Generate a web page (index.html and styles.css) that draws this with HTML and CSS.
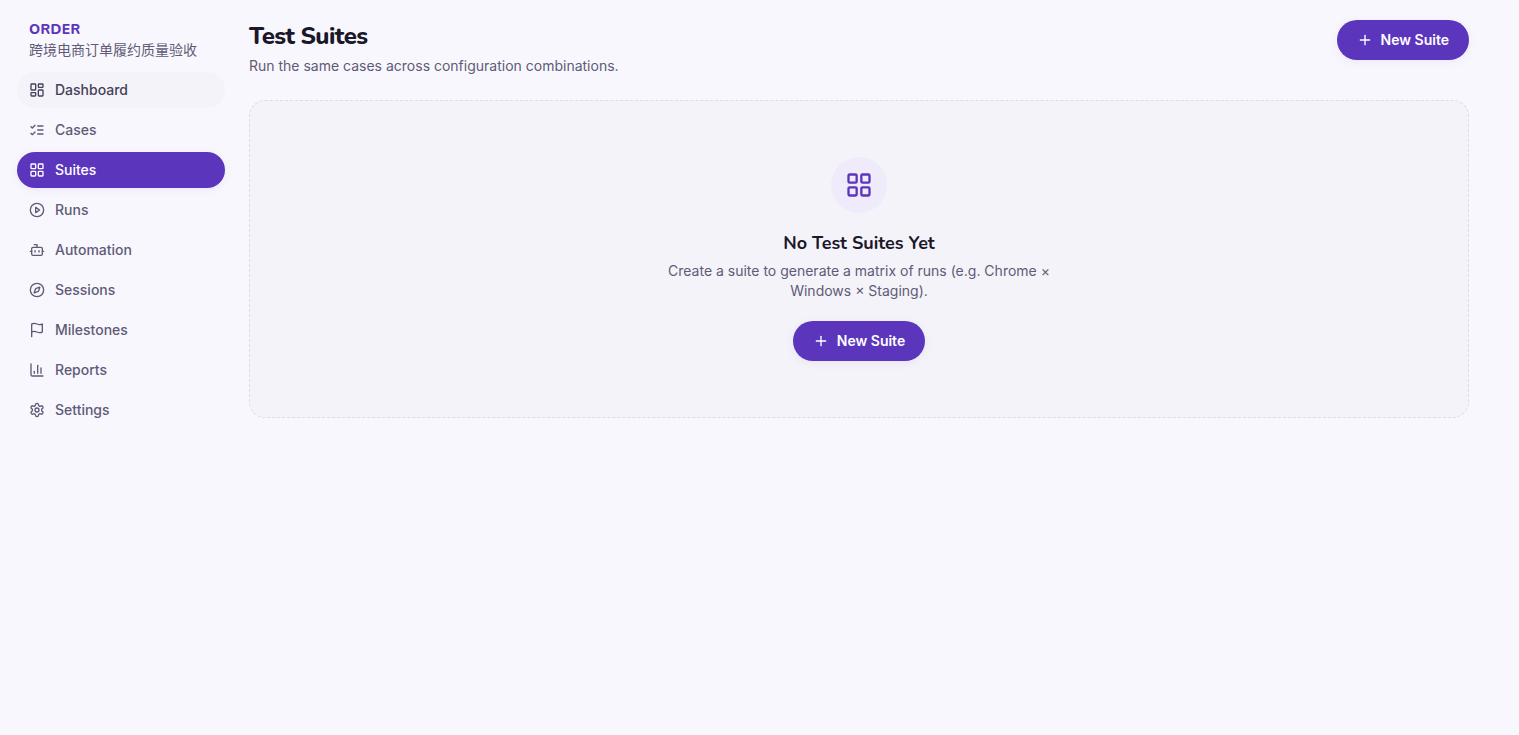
FILE: index.html
```html
<!DOCTYPE html>
<html lang="en">
<head>
    <meta charset="UTF-8">
    <meta name="viewport" content="width=device-width, initial-scale=1.0">
    <title>Test Suites</title>
    <link rel="stylesheet" href="styles.css">
</head>
<body>
    <div class="layout">
        <aside class="sidebar">
            <div class="project">
                <div class="project-key">ORDER</div>
                <div class="project-name" lang="zh-CN">跨境电商订单履约质量验收</div>
            </div>
            <nav class="nav">
                <a href="#" class="nav-link hovered">
                    <svg class="icon" viewBox="0 0 24 24"><rect width="7" height="9" x="3" y="3" rx="1"/><rect width="7" height="5" x="14" y="3" rx="1"/><rect width="7" height="9" x="14" y="12" rx="1"/><rect width="7" height="5" x="3" y="16" rx="1"/></svg>
                    Dashboard
                </a>
                <a href="#" class="nav-link">
                    <svg class="icon" viewBox="0 0 24 24"><path d="m3 17 2 2 4-4"/><path d="m3 7 2 2 4-4"/><path d="M13 6h8"/><path d="M13 12h8"/><path d="M13 18h8"/></svg>
                    Cases
                </a>
                <a href="#" class="nav-link active" aria-current="page">
                    <svg class="icon" viewBox="0 0 24 24"><rect width="7" height="7" x="3" y="3" rx="1"/><rect width="7" height="7" x="14" y="3" rx="1"/><rect width="7" height="7" x="14" y="14" rx="1"/><rect width="7" height="7" x="3" y="14" rx="1"/></svg>
                    Suites
                </a>
                <a href="#" class="nav-link">
                    <svg class="icon" viewBox="0 0 24 24"><circle cx="12" cy="12" r="10"/><polygon points="10 8 16 12 10 16 10 8"/></svg>
                    Runs
                </a>
                <a href="#" class="nav-link">
                    <svg class="icon" viewBox="0 0 24 24"><path d="M12 8V4H8"/><rect width="16" height="12" x="4" y="8" rx="2"/><path d="M2 14h2"/><path d="M20 14h2"/><path d="M15 13v2"/><path d="M9 13v2"/></svg>
                    Automation
                </a>
                <a href="#" class="nav-link">
                    <svg class="icon" viewBox="0 0 24 24"><circle cx="12" cy="12" r="10"/><path d="m16.24 7.76-1.804 5.411a2 2 0 0 1-1.265 1.265L7.76 16.24l1.804-5.411a2 2 0 0 1 1.265-1.265z"/></svg>
                    Sessions
                </a>
                <a href="#" class="nav-link">
                    <svg class="icon" viewBox="0 0 24 24"><path d="M4 15s1-1 4-1 5 2 8 2 4-1 4-1V3s-1 1-4 1-5-2-8-2-4 1-4 1z"/><path d="M4 22v-7"/></svg>
                    Milestones
                </a>
                <a href="#" class="nav-link">
                    <svg class="icon" viewBox="0 0 24 24"><path d="M3 3v16a2 2 0 0 0 2 2h16"/><path d="M18 17V9"/><path d="M13 17V5"/><path d="M8 17v-3"/></svg>
                    Reports
                </a>
                <a href="#" class="nav-link">
                    <svg class="icon" viewBox="0 0 24 24"><path d="M12.22 2h-.44a2 2 0 0 0-2 2v.18a2 2 0 0 1-1 1.73l-.43.25a2 2 0 0 1-2 0l-.15-.08a2 2 0 0 0-2.73.73l-.22.38a2 2 0 0 0 .73 2.73l.15.1a2 2 0 0 1 1 1.72v.51a2 2 0 0 1-1 1.74l-.15.09a2 2 0 0 0-.73 2.73l.22.38a2 2 0 0 0 2.73.73l.15-.08a2 2 0 0 1 2 0l.43.25a2 2 0 0 1 1 1.73V20a2 2 0 0 0 2 2h.44a2 2 0 0 0 2-2v-.18a2 2 0 0 1 1-1.73l.43-.25a2 2 0 0 1 2 0l.15.08a2 2 0 0 0 2.73-.73l.22-.39a2 2 0 0 0-.73-2.73l-.15-.08a2 2 0 0 1-1-1.74v-.5a2 2 0 0 1 1-1.74l.15-.09a2 2 0 0 0 .73-2.73l-.22-.38a2 2 0 0 0-2.73-.73l-.15.08a2 2 0 0 1-2 0l-.43-.25a2 2 0 0 1-1-1.73V4a2 2 0 0 0-2-2z"/><circle cx="12" cy="12" r="3"/></svg>
                    Settings
                </a>
            </nav>
        </aside>

        <main class="content">
            <header class="page-header">
                <div>
                    <h1>Test Suites</h1>
                    <p>Run the same cases across configuration combinations.</p>
                </div>
                <button type="button" class="btn">
                    <svg class="icon" viewBox="0 0 24 24"><path d="M5 12h14"/><path d="M12 5v14"/></svg>
                    New Suite
                </button>
            </header>

            <section class="empty-state">
                <div class="empty-icon">
                    <svg class="icon" viewBox="0 0 24 24"><rect width="7" height="7" x="3" y="3" rx="1"/><rect width="7" height="7" x="14" y="3" rx="1"/><rect width="7" height="7" x="14" y="14" rx="1"/><rect width="7" height="7" x="3" y="14" rx="1"/></svg>
                </div>
                <h2>No Test Suites Yet</h2>
                <p>Create a suite to generate a matrix of runs (e.g. Chrome × Windows × Staging).</p>
                <button type="button" class="btn">
                    <svg class="icon" viewBox="0 0 24 24"><path d="M5 12h14"/><path d="M12 5v14"/></svg>
                    New Suite
                </button>
            </section>
        </main>
    </div>
</body>
</html>
```
FILE: styles.css
```css
* {
    box-sizing: border-box;
}
body {
    margin: 0;
    background-color: #f8f7fd;
    color: #5f5b77;
    font-family: Inter, "Noto Sans CJK SC", sans-serif;
    font-size: 14px;
    line-height: 20px;
}
h1, h2, p {
    margin: 0;
}
h1, h2, .project-key {
    color: #1a1829;
    font-family: Nunito, Lato, sans-serif;
}
.layout {
    display: flex;
    gap: 24px;
    padding: 20px 50px 20px 17px;
}
.sidebar {
    width: 208px;
    flex-shrink: 0;
}
.project {
    padding: 0 12px;
    margin-bottom: 12px;
}
.project-key {
    color: #5c35bd;
    font-weight: 800;
    letter-spacing: 0.025em;
}
.nav {
    display: flex;
    flex-direction: column;
    gap: 4px;
}
.nav-link {
    display: flex;
    align-items: center;
    gap: 10px;
    padding: 8px 12px;
    border-radius: 18px;
    color: #5f5b77;
    font-weight: 500;
    text-decoration: none;
}
.nav-link.hovered {
    background-color: #f4f3f9;
    color: #454158;
}
.nav-link.active {
    background-color: #5c35bd;
    color: #fff;
    box-shadow: 0 2px 8px rgba(92, 53, 189, 0.08);
}
.icon {
    width: 16px;
    height: 16px;
    flex-shrink: 0;
    fill: none;
    stroke: currentColor;
    stroke-width: 2;
    stroke-linecap: round;
    stroke-linejoin: round;
}
.content {
    flex: 1;
    min-width: 0;
}
.page-header {
    display: flex;
    align-items: flex-start;
    justify-content: space-between;
    gap: 16px;
    margin-bottom: 24px;
}
.page-header h1 {
    margin-bottom: 4px;
    font-size: 24px;
    font-weight: 800;
    line-height: 32px;
    letter-spacing: -0.025em;
}
.btn {
    display: inline-flex;
    align-items: center;
    gap: 8px;
    height: 40px;
    padding: 0 20px;
    border: none;
    border-radius: 20px;
    background-color: #5c35bd;
    color: #fff;
    font: inherit;
    font-weight: 600;
    box-shadow: 0 2px 8px rgba(92, 53, 189, 0.08);
    cursor: pointer;
}
.empty-state {
    display: flex;
    flex-direction: column;
    align-items: center;
    padding: 56px 24px;
    border: 1px dashed #dedbe9;
    border-radius: 16px;
    background-color: #f4f3f9;
    text-align: center;
}
.empty-icon {
    display: flex;
    align-items: center;
    justify-content: center;
    width: 56px;
    height: 56px;
    margin-bottom: 16px;
    border-radius: 50%;
    background-color: #efebfa;
    color: #5c35bd;
}
.empty-icon .icon {
    width: 28px;
    height: 28px;
}
.empty-state h2 {
    margin-bottom: 4px;
    font-size: 18px;
    font-weight: 700;
    line-height: 28px;
}
.empty-state p {
    max-width: 384px;
    margin-bottom: 20px;
}
```
